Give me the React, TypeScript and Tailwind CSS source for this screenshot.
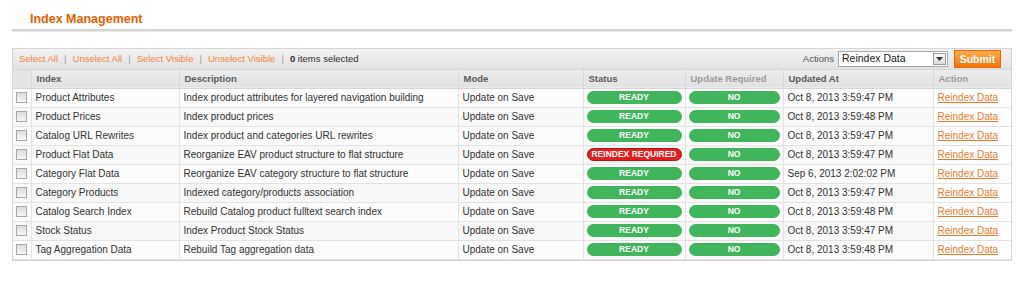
import React from 'react';

type Row = {
  index: string;
  description: string;
  status: 'ready' | 'required';
  updated: string;
};

const ROWS: Row[] = [
  { index: 'Product Attributes', description: 'Index product attributes for layered navigation building', status: 'ready', updated: 'Oct 8, 2013 3:59:47 PM' },
  { index: 'Product Prices', description: 'Index product prices', status: 'ready', updated: 'Oct 8, 2013 3:59:48 PM' },
  { index: 'Catalog URL Rewrites', description: 'Index product and categories URL rewrites', status: 'ready', updated: 'Oct 8, 2013 3:59:47 PM' },
  { index: 'Product Flat Data', description: 'Reorganize EAV product structure to flat structure', status: 'required', updated: 'Oct 8, 2013 3:59:47 PM' },
  { index: 'Category Flat Data', description: 'Reorganize EAV category structure to flat structure', status: 'ready', updated: 'Sep 6, 2013 2:02:02 PM' },
  { index: 'Category Products', description: 'Indexed category/products association', status: 'ready', updated: 'Oct 8, 2013 3:59:47 PM' },
  { index: 'Catalog Search Index', description: 'Rebuild Catalog product fulltext search index', status: 'ready', updated: 'Oct 8, 2013 3:59:48 PM' },
  { index: 'Stock Status', description: 'Index Product Stock Status', status: 'ready', updated: 'Oct 8, 2013 3:59:47 PM' },
  { index: 'Tag Aggregation Data', description: 'Rebuild Tag aggregation data', status: 'ready', updated: 'Oct 8, 2013 3:59:48 PM' },
];

const Badge: React.FC<{ label: string; red?: boolean }> = ({ label, red }) => (
  <div
    className={`mx-[3px] h-[13px] rounded-full flex items-center justify-center text-[8.5px] font-bold text-white leading-none ${
      red ? 'bg-[#e41d1d] border border-[#c01010]' : 'bg-[#41b55c]'
    }`}
  >
    {label}
  </div>
);

const Checkbox = () => (
  <div className="w-[11px] h-[11px] mx-auto border border-[#a8a8a8] bg-gradient-to-b from-[#dcdcdc] to-[#f6f6f6]" />
);

export default function App() {
  const th = 'border-r border-[#d8d8d8] px-[5px] text-left font-bold whitespace-nowrap overflow-hidden';
  const td = 'border-r border-b border-[#e2e2e2] px-[4px] text-[#333] whitespace-nowrap overflow-hidden';

  return (
    <div className="w-[1024px] h-[284px] bg-white font-['Liberation_Sans',Arial,sans-serif] text-[10px]">
      <div className="px-[12px] pt-[11px]">
        <h3 className="pl-[18px] text-[12.5px] font-bold text-[#eb5e00] leading-[16px] h-[18px]">Index Management</h3>
        <div className="h-[3px] bg-[#d4d4d4] border-b border-[#e8e8e8]" />

        <div className="mt-[16px] border border-[#d6d6d6]">
          <div className="h-[21px] flex items-center justify-between pl-[6px] pr-[10px] bg-gradient-to-b from-[#f3f3f3] to-[#e2e2e2] border-b border-[#d6d6d6] text-[9.5px]">
            <div className="flex items-center text-[#9a9a9a]">
              <span className="text-[#f1853d]">Select All</span>
              <span className="mx-[6px]">|</span>
              <span className="text-[#f1853d]">Unselect All</span>
              <span className="mx-[6px]">|</span>
              <span className="text-[#f1853d]">Select Visible</span>
              <span className="mx-[6px]">|</span>
              <span className="text-[#f1853d]">Unselect Visible</span>
              <span className="mx-[6px]">|</span>
              <span className="text-[#2f2f2f]"><b>0</b> items selected</span>
            </div>
            <div className="flex items-center">
              <span className="text-[#555] mr-[4px]">Actions</span>
              <div className="w-[110px] h-[16px] bg-white border border-[#aaa] flex items-center justify-between text-[10.5px] text-[#222] pl-[3px]">
                <span>Reindex Data</span>
                <div className="w-[13px] h-[12px] mr-[1px] border border-[#999] bg-gradient-to-b from-[#fafafa] to-[#dcdcdc] flex items-center justify-center">
                  <svg width="7" height="4" viewBox="0 0 7 4"><path d="M0 0h7L3.5 4z" fill="#333" /></svg>
                </div>
              </div>
              <button className="ml-[6px] w-[47px] h-[18px] bg-gradient-to-b from-[#ffac47] to-[#f07400] border border-[#ed6502] text-white font-bold text-[10.5px] leading-none">
                Submit
              </button>
            </div>
          </div>

          <table className="w-full border-collapse table-fixed">
            <colgroup>
              <col className="w-[18px]" />
              <col className="w-[148px]" />
              <col className="w-[279px]" />
              <col className="w-[125px]" />
              <col className="w-[102px]" />
              <col className="w-[98px]" />
              <col className="w-[150px]" />
              <col />
            </colgroup>
            <thead>
              <tr className="h-[18px] bg-gradient-to-b from-[#ececec] to-[#e2e2e2] border-b border-[#d6d6d6] text-[9.5px]">
                <th className="border-r border-[#d8d8d8] bg-[#e4e4e4]" />
                <th className={`${th} text-[#5a5a5a]`}>Index</th>
                <th className={`${th} text-[#5a5a5a]`}>Description</th>
                <th className={`${th} text-[#5a5a5a]`}>Mode</th>
                <th className={`${th} text-[#5a5a5a]`}>Status</th>
                <th className={`${th} text-[#9b9b9b]`}>Update Required</th>
                <th className={`${th} text-[#5a5a5a]`}>Updated At</th>
                <th className="px-[5px] text-left font-bold text-[#9b9b9b]">Action</th>
              </tr>
            </thead>
            <tbody>
              {ROWS.map((r, i) => (
                <tr key={r.index} className={`h-[19px] ${i % 2 === 1 ? 'bg-[#f8f8f8]' : 'bg-[#fcfcfc]'}`}>
                  <td className="border-r border-b border-[#e2e2e2]">
                    <Checkbox />
                  </td>
                  <td className={td}>{r.index}</td>
                  <td className={td}>{r.description}</td>
                  <td className={td}>Update on Save</td>
                  <td className="border-r border-b border-[#e2e2e2] px-0">
                    {r.status === 'ready' ? <Badge label="READY" /> : <Badge label="REINDEX REQUIRED" red />}
                  </td>
                  <td className="border-r border-b border-[#e2e2e2] px-0">
                    <Badge label="NO" />
                  </td>
                  <td className={td}>{r.updated}</td>
                  <td className="border-b border-[#e2e2e2] px-[4px] bg-white whitespace-nowrap">
                    <span className="underline text-[#eb7a2c]">Reindex Data</span>
                  </td>
                </tr>
              ))}
            </tbody>
          </table>
        </div>
      </div>
    </div>
  );
}
